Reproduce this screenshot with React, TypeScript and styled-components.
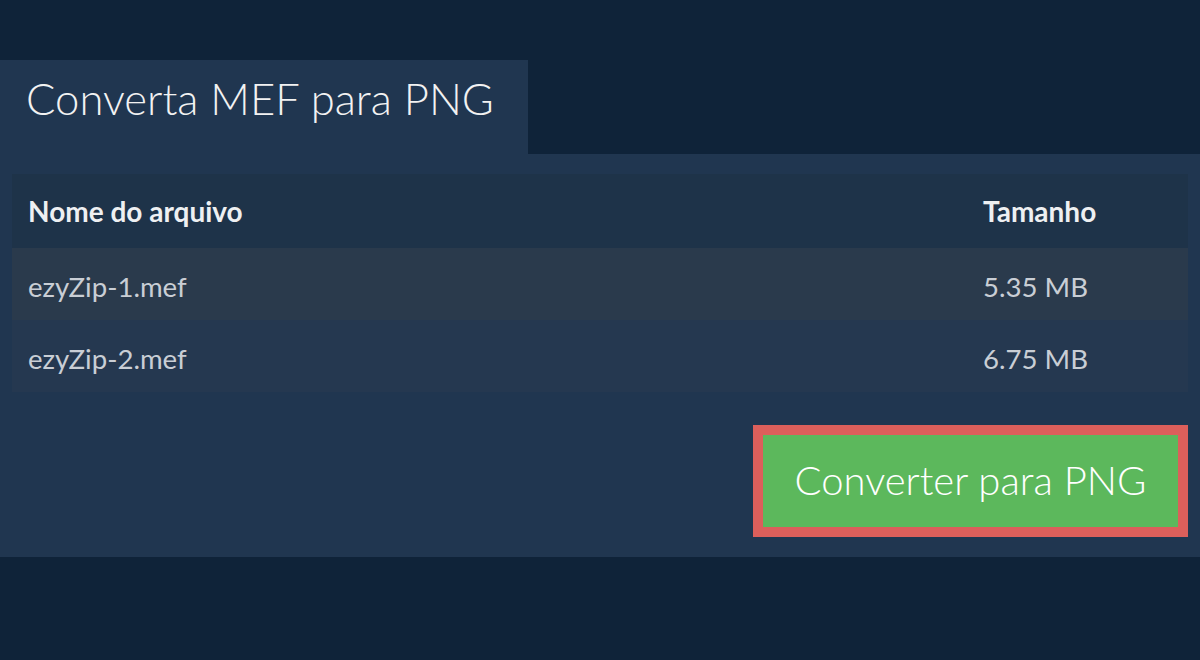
import React from "react";
import styled, { createGlobalStyle } from "styled-components";

const Global = createGlobalStyle`
  html, body { margin: 0; padding: 0; background: #0f2339; }
  body { font-family: Lato, "Open Sans", sans-serif; }
`;

const Page = styled.div`
  width: 1200px;
  height: 660px;
  background: #0f2339;
  padding-top: 60px;
  box-sizing: border-box;
  display: flex;
  flex-direction: column;
`;

const Tab = styled.div`
  width: 528px;
  height: 94px;
  background: #203650;
  box-sizing: border-box;
  padding-left: 26px;
  display: flex;
  align-items: center;
`;

const Title = styled.h1`
  margin: 0;
  font-family: Lato, sans-serif;
  font-weight: 300;
  font-size: 43.6px;
  color: #f2f2f2;
  line-height: 1;
  padding-bottom: 16px;
`;

const Panel = styled.div`
  background: #203650;
  padding: 20px 12px 20px;
  display: flex;
  flex-direction: column;
`;

const Table = styled.div`
  display: grid;
  grid-template-columns: 955px 221px;
`;

const Cell = styled.div<{ $variant: "head" | "odd" | "even" }>`
  height: ${(p) => (p.$variant === "head" ? "74px" : "72px")};
  display: flex;
  align-items: center;
  padding-left: 16px;
  padding-top: ${(p) => (p.$variant === "head" ? "0" : "4px")};
  box-sizing: border-box;
  font-family: Lato, sans-serif;
  font-size: ${(p) => (p.$variant === "head" ? "28px" : "27.6px")};
  font-weight: ${(p) => (p.$variant === "head" ? 700 : 400)};
  color: ${(p) => (p.$variant === "head" ? "#eef0f2" : "#c9ced5")};
  background: ${(p) =>
    p.$variant === "head" ? "#1e3349" : p.$variant === "odd" ? "#2a3a4c" : "#253850"};
`;

const Actions = styled.div`
  display: flex;
  justify-content: flex-end;
  margin-top: 33px;
`;

const Button = styled.button`
  width: 435px;
  height: 112px;
  border: 10px solid #dc5f5b;
  background: #5cb85c;
  color: #ffffff;
  font-family: Lato, sans-serif;
  font-weight: 300;
  font-size: 40px;
  padding: 0 0 2px;
  cursor: pointer;
  box-sizing: border-box;
`;

const rows = [
  { name: "ezyZip-1.mef", size: "5.35 MB" },
  { name: "ezyZip-2.mef", size: "6.75 MB" },
];

export default function App() {
  return (
    <>
      <Global />
      <Page>
        <Tab>
          <Title>Converta MEF para PNG</Title>
        </Tab>
        <Panel>
          <Table>
            <Cell $variant="head">Nome do arquivo</Cell>
            <Cell $variant="head">Tamanho</Cell>
            {rows.map((r, i) => (
              <React.Fragment key={r.name}>
                <Cell $variant={i % 2 === 0 ? "odd" : "even"}>{r.name}</Cell>
                <Cell $variant={i % 2 === 0 ? "odd" : "even"}>{r.size}</Cell>
              </React.Fragment>
            ))}
          </Table>
          <Actions>
            <Button>Converter para PNG</Button>
          </Actions>
        </Panel>
      </Page>
    </>
  );
}
